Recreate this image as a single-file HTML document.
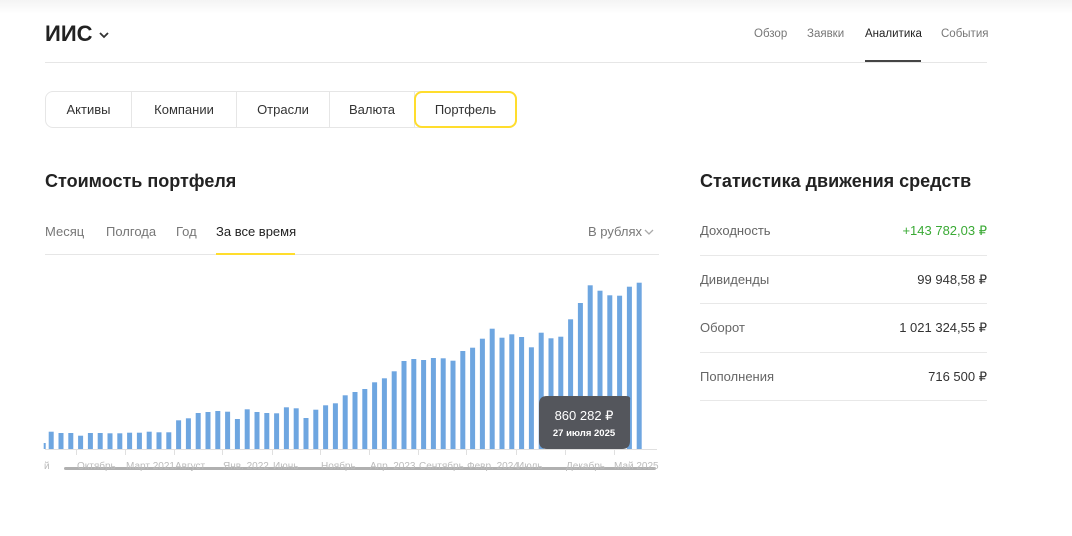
<!DOCTYPE html>
<html><head><meta charset="utf-8"><style>
*{margin:0;padding:0;box-sizing:border-box}
body{width:1072px;height:536px;background:#fff;font-family:"Liberation Sans",sans-serif;color:#333;position:relative;overflow:hidden}
.a{position:absolute;white-space:nowrap}
.nav{font-size:11.5px;color:#777;top:28px}
.tabs{position:absolute;left:45px;top:91px;width:472px;height:37px;border:1px solid #e6e6e6;border-radius:8px;display:flex}
.tabs div{height:100%;display:flex;align-items:center;justify-content:center;font-size:13px;color:#333;border-right:1px solid #e6e6e6}
.per{font-size:13px;color:#777;top:224px}
.lbl{font-size:13px;color:#666;left:700px}
.val{font-size:13px;color:#333;right:85px}
.hr{position:absolute;left:700px;width:287px;height:1px;background:#e8e8e8}
.ax{font-size:10px;color:#bbb;top:461px}
</style></head><body>
<div style="position:absolute;left:0;top:0;width:1072px;height:14px;background:linear-gradient(#f4f4f4,#fff)"></div>
<div class="a" style="left:45px;top:21px;font-size:22px;font-weight:bold;color:#222">ИИС</div>
<svg class="a" style="left:98px;top:31px" width="12" height="8" viewBox="0 0 12 8"><path d="M2 2l4 4 4-4" stroke="#333" stroke-width="1.8" fill="none"/></svg>
<div class="a nav" style="left:754px">Обзор</div>
<div class="a nav" style="left:807px">Заявки</div>
<div class="a nav" style="left:865px;color:#222">Аналитика</div>
<div class="a nav" style="left:941px">События</div>
<div class="a" style="left:45px;top:62px;width:942px;height:1px;background:#e6e6e6"></div>
<div class="a" style="left:865px;top:60px;width:56px;height:2px;background:#444"></div>
<div class="tabs">
<div style="width:86px">Активы</div><div style="width:105px">Компании</div><div style="width:93px">Отрасли</div><div style="width:85px">Валюта</div>
<div style="width:103px;border:2px solid #ffdd2d;border-radius:8px;margin:-1px -1px -1px -1px;height:37px">Портфель</div>
</div>
<div class="a" style="left:45px;top:171px;font-size:18px;font-weight:bold;color:#222">Стоимость портфеля</div>
<div class="a per" style="left:45px">Месяц</div>
<div class="a per" style="left:106px">Полгода</div>
<div class="a per" style="left:176px">Год</div>
<div class="a per" style="left:216px;color:#222">За все время</div>
<div class="a per" style="left:588px">В рублях</div>
<svg class="a" style="left:643px;top:228px" width="12" height="8" viewBox="0 0 12 8"><path d="M2 2l4 4 4-4" stroke="#aaa" stroke-width="1.3" fill="none"/></svg>
<div class="a" style="left:45px;top:254px;width:614px;height:1px;background:#e6e6e6"></div>
<div class="a" style="left:216px;top:253px;width:79px;height:2px;background:#ffdd2d"></div>
<svg class="a" style="left:0;top:0" width="1072" height="536">
<rect x="45" y="449" width="612" height="1" fill="#e0e0e0"/>
<g fill="#e0e0e0">
<rect x="76" y="449" width="1" height="6"/><rect x="125" y="449" width="1" height="6"/><rect x="174" y="449" width="1" height="6"/><rect x="222" y="449" width="1" height="6"/><rect x="272" y="449" width="1" height="6"/><rect x="320" y="449" width="1" height="6"/><rect x="369" y="449" width="1" height="6"/><rect x="418" y="449" width="1" height="6"/><rect x="466" y="449" width="1" height="6"/><rect x="516" y="449" width="1" height="6"/><rect x="565" y="449" width="1" height="6"/><rect x="614" y="449" width="1" height="6"/>
</g>
<g transform="translate(-0.3,449) scale(1,-1)" fill="#6ea6e0">
<rect x="44" width="2" height="6"/>
<rect x="49" width="5" height="17.3"/><rect x="58.8" width="5" height="16"/><rect x="68.6" width="5" height="16"/><rect x="78.4" width="5" height="13.3"/><rect x="88.2" width="5" height="16"/><rect x="98" width="5" height="16"/><rect x="107.8" width="5" height="15.7"/><rect x="117.6" width="5" height="15.7"/><rect x="127.4" width="5" height="16.3"/><rect x="137.2" width="5" height="16.3"/><rect x="147" width="5" height="17.3"/><rect x="156.8" width="5" height="16.7"/><rect x="166.6" width="5" height="16.7"/><rect x="176.4" width="5" height="28.7"/><rect x="186.2" width="5" height="30.7"/><rect x="196" width="5" height="36"/><rect x="205.8" width="5" height="37"/><rect x="215.6" width="5" height="38"/><rect x="225.4" width="5" height="37.3"/><rect x="235.2" width="5" height="30"/><rect x="245" width="5" height="39.7"/><rect x="254.8" width="5" height="37"/><rect x="264.6" width="5" height="36"/><rect x="274.4" width="5" height="35.7"/><rect x="284.2" width="5" height="41.7"/><rect x="294" width="5" height="40.7"/><rect x="303.8" width="5" height="31"/><rect x="313.6" width="5" height="39.3"/><rect x="323.4" width="5" height="43.7"/><rect x="333.2" width="5" height="45.7"/><rect x="343" width="5" height="53.7"/><rect x="352.8" width="5" height="57"/><rect x="362.6" width="5" height="60"/><rect x="372.4" width="5" height="66.7"/><rect x="382.2" width="5" height="70.7"/><rect x="392" width="5" height="77.7"/><rect x="401.8" width="5" height="88"/><rect x="411.6" width="5" height="90"/><rect x="421.4" width="5" height="89"/><rect x="431.2" width="5" height="91"/><rect x="441" width="5" height="90.7"/><rect x="450.8" width="5" height="88.3"/><rect x="460.6" width="5" height="98"/><rect x="470.4" width="5" height="101.3"/><rect x="480.2" width="5" height="110.3"/><rect x="490" width="5" height="120.3"/><rect x="499.8" width="5" height="111.3"/><rect x="509.6" width="5" height="114.7"/><rect x="519.4" width="5" height="112"/><rect x="529.2" width="5" height="101.7"/><rect x="539" width="5" height="116.3"/><rect x="548.8" width="5" height="110.7"/><rect x="558.6" width="5" height="112.3"/><rect x="568.4" width="5" height="129.7"/><rect x="578.2" width="5" height="146"/><rect x="588" width="5" height="163.7"/><rect x="597.8" width="5" height="158.3"/><rect x="607.6" width="5" height="153.7"/><rect x="617.4" width="5" height="153.3"/><rect x="627.2" width="5" height="162.3"/><rect x="637" width="5" height="166.3"/>
</g>
<path d="M547 396 H626 Q631 396 630 400 V441 Q630 449 622 449 H547 Q539 449 539 441 V404 Q539 396 547 396Z" fill="#54565c"/>
<text x="584" y="420" font-size="13" fill="#fff" text-anchor="middle" font-family="Liberation Sans">860 282 ₽</text>
<text x="584" y="436" font-size="9.5" font-weight="bold" fill="#fff" text-anchor="middle" font-family="Liberation Sans">27 июля 2025</text>
<rect x="64" y="467" width="592" height="3" rx="1.5" fill="#b0b0b0"/>
</svg>
<div class="a ax" style="left:44px">й</div>
<div class="a ax" style="left:77px">Октябрь</div>
<div class="a ax" style="left:126px">Март 2021</div>
<div class="a ax" style="left:175px">Август</div>
<div class="a ax" style="left:223px">Янв. 2022</div>
<div class="a ax" style="left:273px">Июнь</div>
<div class="a ax" style="left:321px">Ноябрь</div>
<div class="a ax" style="left:370px">Апр. 2023</div>
<div class="a ax" style="left:419px">Сентябрь</div>
<div class="a ax" style="left:467px">Февр. 2024</div>
<div class="a ax" style="left:517px">Июль</div>
<div class="a ax" style="left:566px">Декабрь</div>
<div class="a ax" style="left:614px">Май 2025</div>
<div class="a" style="left:700px;top:171px;font-size:18px;font-weight:bold;color:#222">Статистика движения средств</div>
<div class="a lbl" style="top:223px">Доходность</div><div class="a val" style="top:223px;color:#3aaa35">+143 782,03 ₽</div>
<div class="hr" style="top:255px"></div>
<div class="a lbl" style="top:272px">Дивиденды</div><div class="a val" style="top:272px">99 948,58 ₽</div>
<div class="hr" style="top:303px"></div>
<div class="a lbl" style="top:320px">Оборот</div><div class="a val" style="top:320px">1 021 324,55 ₽</div>
<div class="hr" style="top:352px"></div>
<div class="a lbl" style="top:369px">Пополнения</div><div class="a val" style="top:369px">716 500 ₽</div>
<div class="hr" style="top:400px"></div>
</body></html>
